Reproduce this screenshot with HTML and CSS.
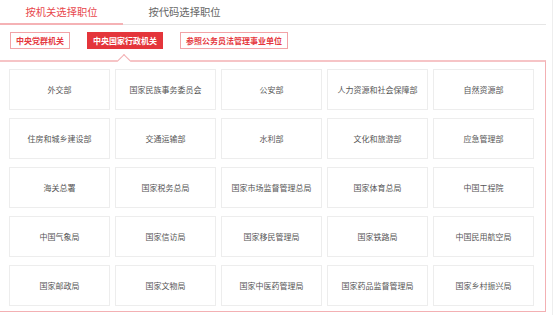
FILE: index.html
```html
<!DOCTYPE html>
<html lang="zh-CN">
<head>
  <meta charset="UTF-8" />
  <meta name="viewport" content="width=device-width, initial-scale=1.0" />
  <title>选择职位</title>
  <link rel="stylesheet" href="styles.css">
</head>
<body>
  <div class="page">
    <div class="tabs">
      <div class="tab active">按机关选择职位</div>
      <div class="tab">按代码选择职位</div>
    </div>

    <div class="filters">
      <span class="filter">中央党群机关</span>
      <span class="filter current">中央国家行政机关</span>
      <span class="filter">参照公务员法管理事业单位</span>
    </div>

    <div class="panel">
      <span class="caret"></span>
      <div class="grid">
        <div class="cell">外交部</div>
        <div class="cell">国家民族事务委员会</div>
        <div class="cell">公安部</div>
        <div class="cell">人力资源和社会保障部</div>
        <div class="cell">自然资源部</div>

        <div class="cell">住房和城乡建设部</div>
        <div class="cell">交通运输部</div>
        <div class="cell">水利部</div>
        <div class="cell">文化和旅游部</div>
        <div class="cell">应急管理部</div>

        <div class="cell">海关总署</div>
        <div class="cell">国家税务总局</div>
        <div class="cell">国家市场监督管理总局</div>
        <div class="cell">国家体育总局</div>
        <div class="cell">中国工程院</div>

        <div class="cell">中国气象局</div>
        <div class="cell">国家信访局</div>
        <div class="cell">国家移民管理局</div>
        <div class="cell">国家铁路局</div>
        <div class="cell">中国民用航空局</div>

        <div class="cell">国家邮政局</div>
        <div class="cell">国家文物局</div>
        <div class="cell">国家中医药管理局</div>
        <div class="cell">国家药品监督管理局</div>
        <div class="cell">国家乡村振兴局</div>
      </div>
    </div>
  </div>
</body>
</html>
```

FILE: styles.css
```css
* { box-sizing: border-box; }

body {
  margin: 0;
  background: #fff;
  font-family: 'Noto Sans CJK SC', 'Noto Sans', sans-serif;
  color: #555;
}

.page {
  width: 553px;
  height: 315px;
  border-right: 1px solid #eeeeee;
  overflow: hidden;
}

/* tabs */
.tabs {
  display: flex;
  width: 546px;
  height: 25px;
  border-bottom: 1px solid #e6e6e6;
}

.tab {
  width: 123px;
  padding-top: 5px;
  font-size: 10.3px;
  line-height: 14px;
  text-align: center;
  color: #666;
}

.tab.active {
  color: #e8474c;
  border-bottom: 2px solid #f5b2b5;
  margin-bottom: -1px;
}

/* filter buttons */
.filters {
  display: flex;
  align-items: flex-start;
  gap: 17px;
  padding: 7px 0 0 10px;
  height: 35px;
}

.filter {
  height: 17px;
  padding: 0 5px;
  border: 1px solid #f2a3a7;
  font-size: 8px;
  font-weight: bold;
  line-height: 15px;
  color: #e5383e;
  background: #fff;
}

.filter.current {
  background: #e4353b;
  border-color: #e4353b;
  color: #fff;
}

/* panel */
.panel {
  position: relative;
  width: 546px;
  border: 1px solid #f3b0b3;
  border-top: 2px solid #f6c4c6;
  border-left: 0;
  padding: 7px 11px 5px 9px;
}

.caret {
  position: absolute;
  top: -6px;
  left: 119px;
  width: 10px;
  height: 10px;
  background: #fff;
  border-top: 1px solid #f3aeb2;
  border-left: 1px solid #f3aeb2;
  transform: rotate(45deg);
}

.grid {
  display: grid;
  grid-template-columns: repeat(5, 101px);
  grid-auto-rows: 41px;
  column-gap: 5px;
  row-gap: 8px;
}

.cell {
  display: flex;
  align-items: center;
  justify-content: center;
  border: 1px solid #ededed;
  font-size: 8px;
  color: #555;
  background: #fff;
}
```
